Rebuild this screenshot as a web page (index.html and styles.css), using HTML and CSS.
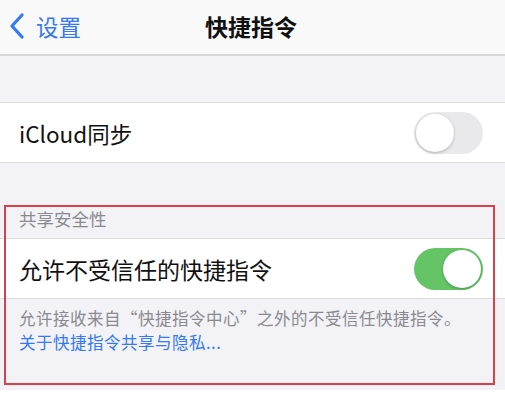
FILE: index.html
```html
<!DOCTYPE html>
<html>
<head>
<meta charset="utf-8">
<link rel="stylesheet" href="styles.css">
</head>
<body>
<div class="screen">
  <div class="nav">
    <div class="back">
      <svg class="chev" width="16" height="26" viewBox="0 0 16 26"><path d="M13 2 L3 13 L13 24" fill="none" stroke="#3478f6" stroke-width="3.2" stroke-linecap="round" stroke-linejoin="round"/></svg>
      <span class="back-text">设置</span>
    </div>
    <div class="title">快捷指令</div>
  </div>
  <div class="gap1"></div>
  <div class="row">
    <span class="label">iCloud同步</span>
    <span class="toggle off"><span class="knob"></span></span>
  </div>
  <div class="section">
    <div class="header">共享安全性</div>
    <div class="row">
      <span class="label">允许不受信任的快捷指令</span>
      <span class="toggle on"><span class="knob"></span></span>
    </div>
    <div class="footer">
      <div class="fline">允许接收来自“快捷指令中心”之外的不受信任快捷指令。</div>
      <div class="fline link">关于快捷指令共享与隐私...</div>
    </div>
    <div class="mark"></div>
  </div>
  <div class="bottom"></div>
</div>
</body>
</html>
```
FILE: styles.css
```css
html, body { margin: 0; padding: 0; }
body {
  width: 505px; height: 400px; overflow: hidden;
  background: #ffffff;
  font-family: "Noto Sans CJK SC", "Noto Sans", sans-serif;
}
.screen { display: flex; flex-direction: column; background: #f2f2f7; height: 390px; }
.nav {
  height: 54px; background: #f9f9f9; border-bottom: 2px solid #d6d6d9;
  position: relative; display: flex; align-items: center; justify-content: center;
}
.back { position: absolute; left: 9px; top: 13px; display: flex; align-items: center; }
.chev { display: block; }
.back-text { color: #3478f6; font-size: 22.5px; line-height: 26px; margin-left: 11px; }
.title { font-size: 23px; font-weight: bold; color: #111; line-height: 26px; margin-top: -2px; margin-left: -3px; }
.gap1 { height: 46px; border-bottom: 1px solid #dcdce0; }
.row {
  height: 60px; background: #fff; display: flex; align-items: center; justify-content: space-between;
  padding: 0 22px 0 19px; box-sizing: border-box; border-bottom: 1px solid #dcdce0;
}
.label { font-size: 22.5px; color: #111; }
.section .label { font-size: 23px; }
.toggle { width: 69px; height: 42px; border-radius: 21px; position: relative; box-sizing: border-box; }
.toggle.off { background: #e9e9eb; }
.toggle.on { background: #65c466; }
.knob {
  position: absolute; top: 2px; width: 38px; height: 38px; border-radius: 50%; background: #fff;
  box-shadow: 0 1px 3px rgba(0,0,0,0.25);
}
.off .knob { left: 2px; }
.on .knob { right: 2px; }
.section { position: relative; padding-top: 45px; }
.section .row { border-top: 1px solid #dcdce0; height: 61px; }
.header { font-size: 17.5px; color: #8a8a8e; padding: 0 19px 9px; line-height: 21px; }
.footer { padding: 7px 19px 0; font-size: 16.5px; letter-spacing: 0.5px; color: #8a8a8e; height: 80px; box-sizing: border-box; white-space: nowrap; }
.fline { line-height: 24px; }
.link { color: #3478f6; }
.mark {
  position: absolute; left: 4px; top: 42px; width: 491px; height: 180px;
  border: 2px solid #d9414b; box-sizing: border-box;
}
.bottom { flex: 1; }
```
